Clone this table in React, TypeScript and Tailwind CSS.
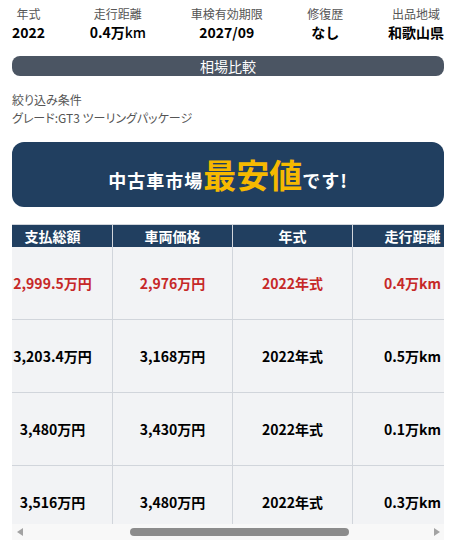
import { useEffect, useRef } from "react";

const stats = [
  { label: "年式", value: "2022" },
  { label: "走行距離", value: "0.4万", unit: "km" },
  { label: "車検有効期限", value: "2027/09" },
  { label: "修復歴", value: "なし" },
  { label: "出品地域", value: "和歌山県" },
];

const columns = ["支払総額", "車両価格", "年式", "走行距離", "修復歴"];

const rows = [
  { cells: ["2,999.5万円", "2,976万円", "2022年式", "0.4万km", "なし"], highlight: true },
  { cells: ["3,203.4万円", "3,168万円", "2022年式", "0.5万km", "なし"] },
  { cells: ["3,480万円", "3,430万円", "2022年式", "0.1万km", "なし"] },
  { cells: ["3,516万円", "3,480万円", "2022年式", "0.3万km", "なし"] },
];

export default function App() {
  const scrollRef = useRef<HTMLDivElement>(null);

  useEffect(() => {
    // the comparison table is shown scrolled a bit to the right
    if (scrollRef.current) scrollRef.current.scrollLeft = 201;
  }, []);

  return (
    <div className="bg-white min-h-[545px] font-['Noto_Sans_CJK_JP',sans-serif] text-black">
      <div className="ml-3 w-[432px]">
        <div className="flex justify-between pt-[6px]">
          {stats.map((s) => (
            <div key={s.label} className="text-center">
              <div className="text-xs leading-4 text-[#555]">{s.label}</div>
              <div className="text-sm leading-5 font-bold">
                {s.value}
                {s.unit && <span className="font-medium">{s.unit}</span>}
              </div>
            </div>
          ))}
        </div>

        <div className="mt-[14px] h-5 rounded-lg bg-[#4b5563] text-white text-sm leading-5 text-center">
          相場比較
        </div>

        <div className="mt-[15px] text-xs leading-[18px] text-[#555] [font-feature-settings:'palt']">
          <p>絞り込み条件</p>
          <p>グレード:GT3 ツーリングパッケージ</p>
        </div>

        <div className="mt-[15px] h-[65px] rounded-xl bg-[#213f60] flex items-center justify-center">
          <p className="flex items-baseline font-bold tracking-[1px] leading-none text-white">
            <span className="text-[18px]">中古車市場</span>
            <span className="text-[33px] tracking-normal text-[#f6b900]">最安値</span>
            <span className="text-[18px]">です!</span>
          </p>
        </div>

        <div ref={scrollRef} className="mt-[17px] h-[300px] overflow-hidden">
          <div className="w-max border-t border-[#d1d5db]">
            <div className="flex h-[22px] bg-[#213f60] text-white text-sm font-bold">
              <div className="w-[182px] border-r border-[#d1d5db] flex items-center justify-center">
                グレード
              </div>
              {columns.map((c) => (
                <div
                  key={c}
                  className="w-[120px] border-r border-[#d1d5db] flex items-center justify-center"
                >
                  {c}
                </div>
              ))}
            </div>
            {rows.map((r, i) => (
              <div
                key={i}
                className={`flex h-[73px] bg-[#f2f3f5] border-b border-[#d1d5db] text-sm font-bold ${
                  r.highlight ? "text-[#c62828]" : "text-black"
                }`}
              >
                <div className="w-[182px] border-r border-[#d1d5db] flex items-center justify-center text-xs font-normal">
                  GT3 ツーリングパッケージ
                </div>
                {r.cells.map((c, j) => (
                  <div
                    key={j}
                    className="w-[120px] border-r border-[#d1d5db] flex items-center justify-center"
                  >
                    {c}
                  </div>
                ))}
              </div>
            ))}
          </div>
        </div>

        {/* scrollbar */}
        <div className="flex items-center h-4 bg-[#f8f8f8]">
          <div className="w-[15px] flex justify-center">
            <svg width="6" height="8" viewBox="0 0 6 8">
              <path d="M6 0 L0 4 L6 8 Z" fill="#a3a3a3" />
            </svg>
          </div>
          <div className="flex-1 flex items-center">
            <div className="ml-[103px] w-[219px] h-2 rounded-full bg-[#8c8c8c]" />
          </div>
          <div className="w-[15px] flex justify-center">
            <svg width="6" height="8" viewBox="0 0 6 8">
              <path d="M0 0 L6 4 L0 8 Z" fill="#a3a3a3" />
            </svg>
          </div>
        </div>
      </div>
    </div>
  );
}
